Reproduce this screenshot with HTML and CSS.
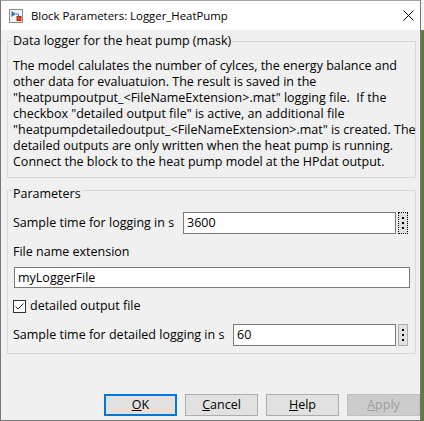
FILE: index.html
```html
<!DOCTYPE html>
<html>
<head>
<meta charset="utf-8">
<title>Block Parameters: Logger_HeatPump</title>
<link rel="stylesheet" href="styles.css">
</head>
<body>
<div class="window">
  <div class="titlebar">
    <svg class="app-icon" width="14" height="14" viewBox="0 0 14 14">
      <rect x="0.5" y="0.5" width="13" height="13" fill="#f2f2f2" stroke="#8c8c8c"/>
      <path d="M2.5 2 L7 5 L2.5 8 Z" fill="#2f74c8"/>
      <path d="M7 5 H9.5 V8" stroke="#2f74c8" fill="none"/>
      <rect x="8" y="7.5" width="4" height="4" fill="#e8481f" stroke="#a12d10"/>
    </svg>
    <span class="title">Block Parameters: Logger_HeatPump</span>
    <svg class="close" width="11" height="11" viewBox="0 0 11 11">
      <path d="M0.5 0.5 L10.5 10.5 M10.5 0.5 L0.5 10.5" stroke="#000" stroke-width="1" fill="none"/>
    </svg>
  </div>
  <div class="content">
    <section class="group g1">
      <div class="group-title">Data logger for the heat pump (mask)</div>
      <p class="desc">The model calulates the number of cylces, the energy balance and<br>other data for evaluatuion. The result is saved in the<br>"heatpumpoutput_&lt;FileNameExtension&gt;.mat" logging file.&nbsp; If the<br>checkbox "detailed output file" is active, an additional file<br>"heatpumpdetailedoutput_&lt;FileNameExtension&gt;.mat" is created. The<br>detailed outputs are only written when the heat pump is running.<br>Connect the block to the heat pump model at the HPdat output.</p>
    </section>
    <section class="group g2">
      <div class="group-title g2-title">Parameters</div>
      <div class="row">
        <span class="label lbl1">Sample time for logging in s</span>
        <div class="field">3600</div>
        <span class="dots focus"><span class="dot"></span></span>
      </div>
      <div class="name-label">File name extension</div>
      <div class="field field-wide">myLoggerFile</div>
      <div class="check-row">
        <span class="checkbox">
          <svg width="11" height="11" viewBox="0 0 11 11"><path d="M1.5 5.5 L4 8 L9.5 2.5" stroke="#222" stroke-width="1" fill="none"/></svg>
        </span>
        <span class="check-label">detailed output file</span>
      </div>
      <div class="row row3">
        <span class="label lbl3">Sample time for detailed logging in s</span>
        <div class="field">60</div>
        <span class="dots"><span class="dot"></span></span>
      </div>
    </section>
    <div class="buttons">
      <button class="btn default"><u>O</u>K</button>
      <button class="btn"><u>C</u>ancel</button>
      <button class="btn"><u>H</u>elp</button>
      <button class="btn disabled"><u>A</u>pply</button>
    </div>
  </div>
</div>
</body>
</html>
```

FILE: styles.css
```css
html, body {
  margin: 0;
  padding: 0;
}
body {
  width: 424px;
  height: 421px;
  overflow: hidden;
  background: linear-gradient(#f4f4f4 0, #f4f4f4 30px, #5e7f33 30px);
  font-family: "Open Sans", "Noto Sans", sans-serif;
  font-size: 12.5px;
  color: #000;
}
.window {
  width: 421px;
  height: 421px;
  box-sizing: border-box;
  border: 1px solid #767676;
  border-top-color: #a0a0a0;
  background: #f0f0f0;
  display: flex;
  flex-direction: column;
}
.titlebar {
  flex: none;
  height: 29px;
  background: #fff;
  display: flex;
  align-items: center;
  padding-left: 8px;
  line-height: 16px;
}
.app-icon {
  flex: none;
  display: block;
}
.title {
  margin-left: 8px;
  white-space: nowrap;
  font-size: 11.4px;
}
.close {
  margin-left: auto;
  margin-right: 6px;
  display: block;
}
.content {
  flex: 1;
  display: flex;
  flex-direction: column;
  padding: 11px 0 4px 6px;
}
.group {
  position: relative;
  width: 409px;
  box-sizing: border-box;
  border: 1px solid #d9d9d9;
}
.group-title {
  position: absolute;
  left: 4px;
  top: -9px;
  padding: 0 1px;
  line-height: 16px;
  background: #f0f0f0;
  white-space: nowrap;
}
.g2-title {
  top: -5px;
}
.desc {
  margin: 0;
  padding: 16px 5px 7px 5px;
  line-height: 16px;
  white-space: nowrap;
}
.g2 {
  margin-top: 12px;
  padding: 21px 5px 7px 5px;
  display: flex;
  flex-direction: column;
}
.row {
  display: flex;
  align-items: center;
  height: 22px;
}
.label {
  flex: none;
  white-space: nowrap;
  line-height: 16px;
}
.lbl1 {
  width: 170px;
}
.lbl3 {
  width: 220px;
}
.field {
  flex: 1;
  height: 22px;
  box-sizing: border-box;
  border: 1px solid #7a7a7a;
  background: #fff;
  padding: 0 3px;
  display: flex;
  align-items: center;
  line-height: 16px;
}
.field-wide {
  flex: none;
  height: 21px;
  margin-left: 1px;
  margin-top: 7px;
}
.dots {
  flex: none;
  width: 10px;
  height: 22px;
  box-sizing: border-box;
  margin: 0 2px;
  border: 1px solid #adadad;
  background: #e1e1e1;
  display: flex;
  align-items: center;
  justify-content: center;
}
.dots.focus {
  border: 1px dotted #000;
}
.dot {
  width: 2px;
  height: 2px;
  background: #000;
  box-shadow: 0 -5px 0 #000, 0 5px 0 #000;
}
.name-label {
  margin-top: 10px;
  line-height: 16px;
}
.check-row {
  margin-top: 10px;
  height: 16px;
  display: flex;
  align-items: center;
  line-height: 16px;
}
.checkbox {
  flex: none;
  width: 13px;
  height: 13px;
  box-sizing: border-box;
  border: 1px solid #333;
  background: #fff;
  display: flex;
  align-items: center;
  justify-content: center;
}
.checkbox svg {
  display: block;
}
.check-label {
  margin-left: 4px;
}
.row3 {
  margin-top: 10px;
}
.buttons {
  margin-top: auto;
  display: flex;
  justify-content: flex-end;
  gap: 8px;
}
.btn {
  width: 73px;
  height: 22px;
  box-sizing: border-box;
  padding: 0;
  margin: 0;
  border: 1px solid #adadad;
  background: #e1e1e1;
  font-family: "Open Sans", "Noto Sans", sans-serif;
  font-size: 12.5px;
  line-height: 16px;
  color: #000;
}
.btn.default {
  border: 2px solid #0078d7;
}
.btn.disabled {
  background: #cccccc;
  border-color: #bfbfbf;
  color: #a0a0a0;
}
```
